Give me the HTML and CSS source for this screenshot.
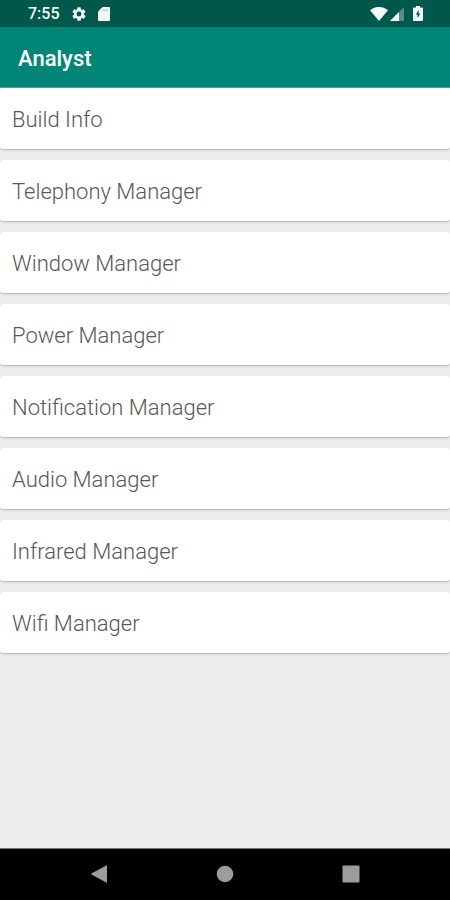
FILE: index.html
```html
<!DOCTYPE html>
<html lang="en">
<head>
<meta charset="utf-8">
<meta name="viewport" content="width=device-width, initial-scale=1">
<title>Analyst</title>
<link rel="stylesheet" href="styles.css">
</head>
<body>
<div class="status">
  <div class="status-group">
    <time class="clock">7:55</time>
    <svg class="gear" width="16" height="16" viewBox="0 0 24 24" aria-hidden="true"><path fill="currentColor" fill-rule="evenodd" d="M19.4 13a7.500 7.500 0 0 0 0-2l2.200-1.700a.5.5 0 0 0 .1-.6l-2-3.500a.5.5 0 0 0-.6-.2l-2.500 1a7.300 7.300 0 0 0-1.700-1l-.4-2.600a.5.5 0 0 0-.5-.4h-4a.5.5 0 0 0-.5.4L9.100 5a7.700 7.700 0 0 0-1.700 1l-2.500-1a.5.5 0 0 0-.6.2l-2 3.500a.5.5 0 0 0 .1.6L4.600 11a7.900 7.900 0 0 0 0 2l-2.200 1.700a.5.5 0 0 0-.1.6l2 3.500c.1.2.4.3.6.2l2.500-1a7.300 7.300 0 0 0 1.700 1l.4 2.600c0 .2.2.4.5.4h4c.2 0 .5-.2.5-.4l.4-2.600a7.700 7.700 0 0 0 1.700-1l2.500 1c.2.1.5 0 .6-.2l2-3.500a.5.5 0 0 0-.1-.6zM12 8.300a3.700 3.700 0 1 1 0 7.400 3.700 3.700 0 0 1 0-7.400z"/></svg>
    <svg width="12" height="14" viewBox="0 0 12 14" aria-hidden="true"><path fill="currentColor" d="M4.500 0H11a1 1 0 0 1 1 1v12a1 1 0 0 1-1 1H1a1 1 0 0 1-1-1V4.500z"/><path stroke="#00574b" stroke-width=".8" opacity=".4" d="M5 2v2.500M7.200 2v2.500M9.400 2v2.500"/></svg>
  </div>
  <div class="status-group signals">
    <svg width="18" height="14" viewBox="0 0 18 14" aria-hidden="true"><path fill="currentColor" d="M9 14 0 3.200C5-1.100 13-1.100 18 3.200z"/></svg>
    <svg width="14" height="14" viewBox="0 0 14 14" aria-hidden="true"><path fill="currentColor" opacity=".35" d="M14 0v14H0z"/><path fill="currentColor" d="M9 5v9H0z"/></svg>
    <svg class="battery" width="10" height="15" viewBox="0 0 10 15" aria-hidden="true"><path fill="currentColor" d="M3 0h4v1.500h2a1 1 0 0 1 1 1V14a1 1 0 0 1-1 1H1a1 1 0 0 1-1-1V2.500a1 1 0 0 1 1-1h2z"/><path fill="#00574b" d="M5.600 4 2.800 8.600h1.700v3.600l2.700-4.800H5.600z"/></svg>
  </div>
</div>
<header class="appbar"><h1>Analyst</h1></header>
<main>
  <ul class="list">
    <li><button type="button" class="card">Build Info</button></li>
    <li><button type="button" class="card">Telephony Manager</button></li>
    <li><button type="button" class="card">Window Manager</button></li>
    <li><button type="button" class="card">Power Manager</button></li>
    <li><button type="button" class="card">Notification Manager</button></li>
    <li><button type="button" class="card">Audio Manager</button></li>
    <li><button type="button" class="card">Infrared Manager</button></li>
    <li><button type="button" class="card">Wifi Manager</button></li>
  </ul>
</main>
<nav class="navbar">
  <button type="button" aria-label="Back"><svg width="18" height="18" viewBox="0 0 18 18"><path fill="currentColor" d="M17 .8v16.400a.5.5 0 0 1-.8.400L1.400 9.400a.5.5 0 0 1 0-.8L16.200.4a.5.5 0 0 1 .8.400z"/></svg></button>
  <button type="button" aria-label="Home"><svg width="18" height="18" viewBox="0 0 18 18"><circle cx="9" cy="9" r="8.300" fill="currentColor"/></svg></button>
  <button type="button" aria-label="Overview"><svg width="18" height="18" viewBox="0 0 18 18"><rect x=".5" y=".5" width="17" height="17" rx="1" fill="currentColor"/></svg></button>
</nav>
</body>
</html>
```
FILE: styles.css
```css
* {
  box-sizing: border-box;
}

body {
  margin: 0;
  min-height: 100vh;
  display: flex;
  flex-direction: column;
  background: #ededed;
  font-family: Roboto, "Liberation Sans", sans-serif;
}

svg {
  display: block;
}

button {
  border: 0;
  padding: 0;
  font: inherit;
}

.status {
  display: flex;
  justify-content: space-between;
  align-items: center;
  height: 27px;
  padding: 0 27px 0 28px;
  background: #00574b;
  color: #f4f8f7;
}

.status-group {
  display: flex;
  align-items: center;
  gap: 11px;
}

.signals {
  gap: 2px;
}

.battery {
  margin-left: 7px;
}

.clock {
  font-size: 16px;
  line-height: 20px;
  font-weight: 500;
}

.appbar {
  padding: 18px 18px 14px;
  border-bottom: 1px solid #55a097;
  background: #008577;
  color: #fff;
}

h1 {
  margin: 0;
  font-size: 22px;
  line-height: 28px;
  font-weight: 500;
}

main {
  flex: 1;
}

.list {
  display: flex;
  flex-direction: column;
  gap: 11px;
  margin: 0;
  padding: 0;
  list-style: none;
}

.card {
  display: block;
  width: 100%;
  padding: 18px 12px 15px;
  border-radius: 3px;
  background: #fff;
  box-shadow: 0 1px 2px rgba(0, 0, 0, 0.25);
  color: #585858;
  font-size: 22px;
  line-height: 28px;
  font-weight: 300;
  text-align: left;
}

.navbar {
  display: grid;
  grid-template-columns: repeat(3, 1fr);
  height: 52px;
  padding: 0 8% 2px;
  border-top: 1px solid #777;
  background: #000;
}

.navbar button {
  display: flex;
  align-items: center;
  justify-content: center;
  background: none;
  color: #9c9c9c;
}
```
